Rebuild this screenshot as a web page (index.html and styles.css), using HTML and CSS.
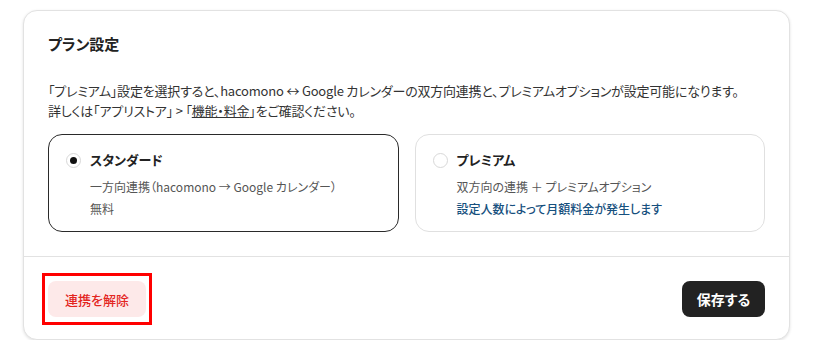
FILE: index.html
```html
<!DOCTYPE html>
<html lang="ja">
<head>
    <meta charset="utf-8">
    <meta name="viewport" content="width=device-width, initial-scale=1.0">
    <link rel="stylesheet" href="styles.css">
</head>
<body>

<div class="plan-card">
    <div class="plan-body">
        <h2 class="plan-title">プラン設定</h2>

        <p class="plan-desc">
            「プレミアム」設定を選択すると、hacomono ↔ Google カレンダーの双方向連携と、プレミアムオプションが設定可能になります。<br>
            詳しくは「アプリストア」 &gt; 「<a class="plan-link" href="#">機能・料金</a>」をご確認ください。
        </p>

        <div class="plan-options">
            <label class="plan-option selected">
                <span class="radio checked"></span>
                <span class="option-text">
                    <span class="option-name">スタンダード</span>
                    <span class="option-sub">一方向連携（hacomono → Google カレンダー）</span>
                    <span class="option-sub">無料</span>
                </span>
            </label>
            <label class="plan-option">
                <span class="radio"></span>
                <span class="option-text">
                    <span class="option-name">プレミアム</span>
                    <span class="option-sub">双方向の連携 ＋ プレミアムオプション</span>
                    <span class="option-sub note">設定人数によって月額料金が発生します</span>
                </span>
            </label>
        </div>
    </div>

    <div class="plan-footer">
        <button class="btn btn-danger highlighted">連携を解除</button>
        <button class="btn btn-save">保存する</button>
    </div>
</div>

</body>
</html>
```

FILE: styles.css
```css
body {
    font-family: "Noto Sans CJK JP", "Noto Sans", sans-serif;
    font-feature-settings: "palt";
    margin: 0;
    padding: 0;
    background-color: #fff;
    color: #222;
}

.plan-card {
    width: 765px;
    margin: 10px 0 0 23px;
    border: 1px solid #e2e2e2;
    border-radius: 14px;
    background-color: #fff;
    box-shadow: 0 1px 3px rgba(0, 0, 0, 0.12);
}

.plan-body {
    padding: 22px 24px 24px;
    border-bottom: 1px solid #e2e2e2;
}

.plan-title {
    margin: 0;
    font-size: 15px;
    line-height: 22px;
    font-weight: bold;
    color: #222;
}

.plan-desc {
    margin: 26px 0 13px;
    font-size: 13px;
    line-height: 20px;
    letter-spacing: -0.2px;
    color: #333;
    white-space: nowrap;
}

.plan-link {
    color: #333;
    text-decoration: underline;
}

.plan-options {
    display: flex;
    gap: 16px;
}

.plan-option {
    flex: 1;
    display: flex;
    align-items: flex-start;
    gap: 9px;
    height: 98px;
    box-sizing: border-box;
    padding: 15px 16px 13px 17px;
    border: 1px solid #e0e0e0;
    border-radius: 14px;
}

.plan-option.selected {
    border-color: #2a2a2a;
}

.radio {
    flex: none;
    width: 15px;
    height: 15px;
    margin-top: 3px;
    border: 1px solid #d8d8d8;
    border-radius: 50%;
    box-sizing: border-box;
    display: flex;
    align-items: center;
    justify-content: center;
}

.radio.checked::after {
    content: "";
    width: 7px;
    height: 7px;
    border-radius: 50%;
    background-color: #111;
}

.option-text {
    display: flex;
    flex-direction: column;
}

.option-name {
    font-size: 13px;
    line-height: 20px;
    font-weight: bold;
    color: #222;
    margin-bottom: 6px;
}

.option-sub {
    font-size: 12px;
    line-height: 22px;
    color: #555;
}

.option-sub.note {
    color: #16507e;
    font-weight: 500;
}

.plan-footer {
    display: flex;
    justify-content: space-between;
    align-items: center;
    padding: 24px 24px 22px;
}

.btn {
    font-family: inherit;
    font-feature-settings: "palt";
    height: 36px;
    padding: 0 12px;
    border: none;
    border-radius: 8px;
    font-size: 13px;
    white-space: nowrap;
    cursor: pointer;
}

.btn-danger {
    width: 98px;
    background-color: #fde9e9;
    color: #e3261f;
    font-weight: 500;
}

.btn-save {
    width: 83px;
    background-color: #222;
    color: #fff;
    font-weight: bold;
    font-size: 14px;
}

.highlighted {
    position: relative;
}

.highlighted::after {
    content: "";
    position: absolute;
    top: -8px;
    bottom: -8px;
    left: -6px;
    right: -6px;
    border: 3px solid #ff0000;
}
```
